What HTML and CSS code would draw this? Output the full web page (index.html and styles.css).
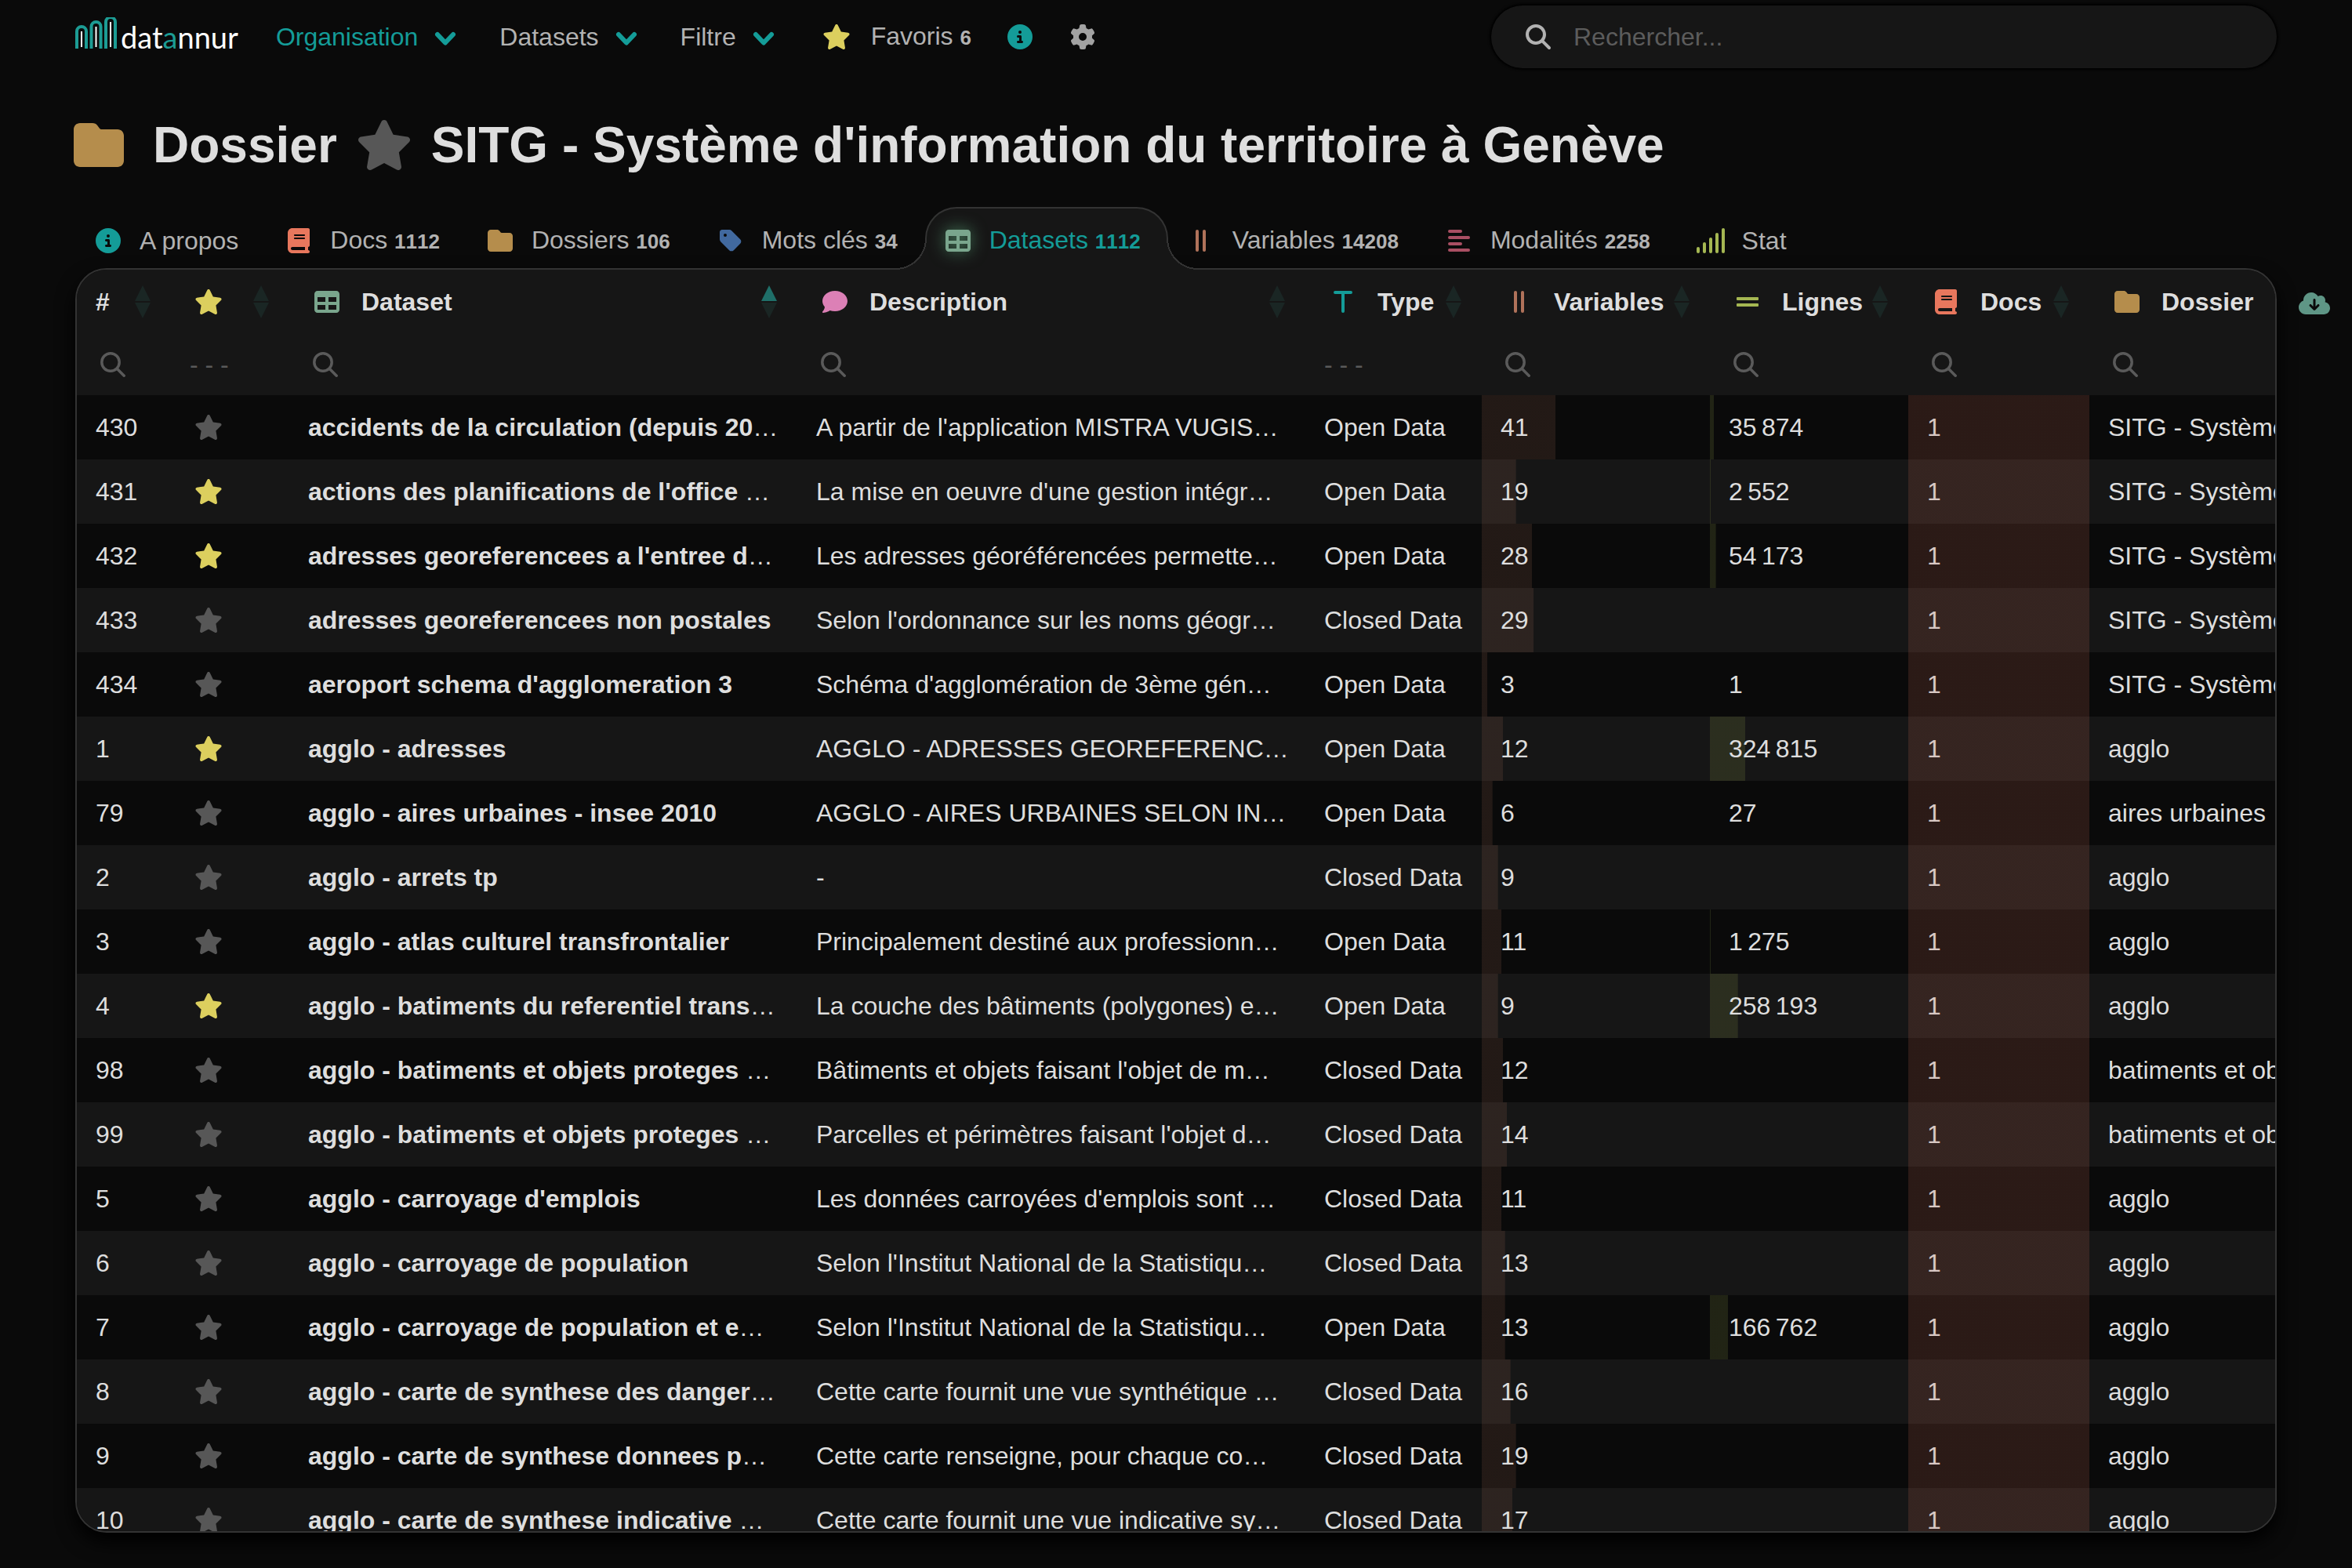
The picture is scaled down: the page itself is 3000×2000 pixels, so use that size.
FILE: index.html
```html
<!DOCTYPE html>
<html lang="fr">
<head>
<meta charset="utf-8">
<meta name="viewport" content="width=device-width, initial-scale=1">
<title>SITG - Système d'information du territoire à Genève | datannur</title>
<link rel="stylesheet" href="styles.css">
</head>
<body>
<svg class="sprite" aria-hidden="true">
  <symbol id="star" viewBox="0 0 576 512"><path d="M316.9 18C311.6 7 300.4 0 288.1 0s-23.4 7-28.8 18L195 150.3 51.4 171.5c-12 1.8-22 10.2-25.7 21.7s-.7 24.2 7.9 32.7L137.8 329 113.2 474.7c-2 12 3 24.2 12.9 31.3s23 8 33.8 2.3l128.3-68.5 128.3 68.5c10.8 5.7 23.9 4.9 33.8-2.3s14.9-19.3 12.9-31.3L438.5 329 542.7 225.9c8.6-8.5 11.7-21.2 7.9-32.7s-13.7-19.9-25.7-21.7L381.2 150.3 316.9 18z"/></symbol>
  <symbol id="info" viewBox="0 0 512 512"><path d="M256 512A256 256 0 1 0 256 0a256 256 0 1 0 0 512zM216 336h24V272H216c-13.3 0-24-10.7-24-24s10.7-24 24-24h48c13.3 0 24 10.7 24 24v88h8c13.3 0 24 10.7 24 24s-10.7 24-24 24H216c-13.3 0-24-10.7-24-24s10.7-24 24-24zm40-208a32 32 0 1 1 0 64 32 32 0 1 1 0-64z"/></symbol>
  <symbol id="gear" viewBox="0 0 512 512"><path d="M495.9 166.6c3.2 8.7 .5 18.4-6.4 24.6l-43.3 39.4c1.1 8.3 1.7 16.8 1.7 25.4s-.6 17.1-1.7 25.4l43.3 39.4c6.9 6.2 9.6 15.9 6.4 24.6c-4.4 11.9-9.7 23.3-15.8 34.3l-4.7 8.1c-6.6 11-14 21.4-22.1 31.2c-5.9 7.2-15.7 9.6-24.5 6.8l-55.7-17.7c-13.4 10.3-28.2 18.9-44 25.4l-12.5 57.1c-2 9.1-9 16.3-18.2 17.8c-13.8 2.3-28 3.5-42.5 3.5s-28.7-1.2-42.5-3.5c-9.2-1.5-16.2-8.7-18.2-17.8l-12.5-57.1c-15.8-6.5-30.6-15.1-44-25.4L83.1 425.9c-8.8 2.8-18.6 .3-24.5-6.8c-8.1-9.8-15.5-20.2-22.1-31.2l-4.7-8.1c-6.1-11-11.4-22.4-15.8-34.3c-3.2-8.7-.5-18.4 6.4-24.6l43.3-39.4C64.6 273.1 64 264.6 64 256s.6-17.1 1.7-25.4L22.4 191.2c-6.9-6.2-9.6-15.9-6.4-24.6c4.4-11.9 9.7-23.3 15.8-34.3l4.7-8.1c6.6-11 14-21.4 22.1-31.2c5.9-7.2 15.7-9.6 24.5-6.8l55.7 17.7c13.4-10.3 28.2-18.9 44-25.4l12.5-57.1c2-9.1 9-16.3 18.2-17.8C227.3 1.2 241.5 0 256 0s28.7 1.2 42.5 3.5c9.2 1.5 16.2 8.7 18.2 17.8l12.5 57.1c15.8 6.5 30.6 15.1 44 25.4l55.7-17.7c8.8-2.8 18.6-.3 24.5 6.8c8.1 9.8 15.5 20.2 22.1 31.2l4.7 8.1c6.1 11 11.4 22.4 15.8 34.3zM256 336a80 80 0 1 0 0-160 80 80 0 1 0 0 160z"/></symbol>
  <symbol id="search" viewBox="0 0 512 512"><path d="M416 208c0 45.9-14.9 88.3-40 122.7L502.6 457.4c12.5 12.5 12.5 32.8 0 45.3s-32.8 12.5-45.3 0L330.7 376c-34.4 25.2-76.8 40-122.7 40C93.1 416 0 322.9 0 208S93.1 0 208 0S416 93.1 416 208zM208 352a144 144 0 1 0 0-288 144 144 0 1 0 0 288z"/></symbol>
  <symbol id="loupe" viewBox="0 0 32 32"><g fill="none" stroke="currentColor" stroke-width="3.500" stroke-linecap="round"><circle cx="13" cy="13" r="11.2"/><path d="M21.5 21.5l8.700 8.700"/></g></symbol>
  <symbol id="chevron" viewBox="0 0 30 30"><path d="M5 12L15 22.500L25 12" fill="none" stroke="currentColor" stroke-width="6" stroke-linecap="round" stroke-linejoin="round"/></symbol>
  <symbol id="book" viewBox="0 0 448 512"><path d="M96 0C43 0 0 43 0 96V416c0 53 43 96 96 96H384h32c17.7 0 32-14.3 32-32s-14.3-32-32-32V384c17.7 0 32-14.3 32-32V32c0-17.7-14.3-32-32-32H384 96zm0 384H352v64H96c-17.7 0-32-14.3-32-32s14.3-32 32-32zm32-240c0-8.8 7.2-16 16-16H336c8.8 0 16 7.2 16 16s-7.2 16-16 16H144c-8.8 0-16-7.2-16-16zm16 48H336c8.8 0 16 7.2 16 16s-7.2 16-16 16H144c-8.8 0-16-7.2-16-16s7.2-16 16-16z"/></symbol>
  <symbol id="folder" viewBox="0 0 512 512"><path d="M64 480H448c35.3 0 64-28.7 64-64V160c0-35.3-28.7-64-64-64H288c-10.1 0-19.6-4.7-25.6-12.8L243.2 57.6C231.1 41.5 212.1 32 192 32H64C28.7 32 0 60.7 0 96V416c0 35.3 28.7 64 64 64z"/></symbol>
  <symbol id="tag" viewBox="0 0 448 512"><path d="M0 80V229.5c0 17 6.7 33.3 18.7 45.3l176 176c25 25 65.5 25 90.5 0L418.7 317.3c25-25 25-65.5 0-90.5l-176-176c-12-12-28.3-18.7-45.3-18.7H48C21.5 32 0 53.5 0 80zm112 32a32 32 0 1 1 0 64 32 32 0 1 1 0-64z"/></symbol>
  <symbol id="grid" viewBox="0 0 512 512"><path d="M64 256V160H224v96H64zm0 64H224v96H64V320zm224 96V320H448v96H288zM448 256H288V160H448v96zM64 32C28.7 32 0 60.7 0 96V416c0 35.3 28.7 64 64 64H448c35.3 0 64-28.7 64-64V96c0-35.3-28.7-64-64-64H64z"/></symbol>
  <symbol id="comment" viewBox="0 0 512 512"><path d="M512 240c0 114.9-114.6 208-256 208c-37.1 0-72.3-6.4-104.1-17.9c-11.9 8.7-31.3 20.6-54.3 30.6C73.6 471.1 44.7 480 16 480c-6.5 0-12.3-3.9-14.8-9.9c-2.5-6-1.1-12.8 3.4-17.4l.3-.3c.3-.3 .7-.7 1.3-1.4c1.1-1.2 2.8-3.1 4.9-5.7c4.1-5 9.6-12.4 15.2-21.6c10-16.6 19.5-38.4 21.4-62.9C17.7 326.8 0 285.1 0 240C0 125.1 114.6 32 256 32s256 93.1 256 208z"/></symbol>
  <symbol id="columns" viewBox="0 0 32 32"><rect x="9" y="2" width="4" height="28" rx="2"/><rect x="18" y="2" width="4" height="28" rx="2"/></symbol>
  <symbol id="lines" viewBox="0 0 32 32"><rect x="2" y="10" width="28" height="4" rx="1"/><rect x="2" y="18" width="28" height="4" rx="1"/></symbol>
  <symbol id="values" viewBox="0 0 32 32"><rect x="2" y="2" width="18" height="4" rx="2"/><rect x="2" y="10" width="28" height="4" rx="2"/><rect x="2" y="18" width="18" height="4" rx="2"/><rect x="2" y="26" width="28" height="4" rx="2"/></symbol>
  <symbol id="type" viewBox="0 0 32 32"><rect x="4" y="2" width="24" height="4" rx="2"/><rect x="14" y="3" width="4" height="27" rx="2"/></symbol>
  <symbol id="signal" viewBox="0 0 40 32"><rect x="2" y="24" width="4" height="8" rx="2"/><rect x="10" y="18" width="4" height="14" rx="2"/><rect x="18" y="12" width="4" height="20" rx="2"/><rect x="26" y="6" width="4" height="26" rx="2"/><rect x="34" y="0" width="4" height="32" rx="2"/></symbol>
  <symbol id="download" viewBox="0 0 640 512"><path d="M144 480C64.5 480 0 415.5 0 336c0-62.8 40.2-116.2 96.2-135.9c-.1-2.7-.2-5.4-.2-8.1c0-88.4 71.6-160 160-160c59.3 0 111 32.2 138.7 80.2C409.9 102 428.3 96 448 96c53 0 96 43 96 96c0 12.2-2.3 23.8-6.4 34.6C596 238.4 640 290.1 640 352c0 70.7-57.3 128-128 128H144zm79-167l80 80c9.4 9.4 24.6 9.4 33.9 0l80-80c9.4-9.4 9.4-24.6 0-33.9s-24.6-9.4-33.9 0l-39 39V184c0-13.3-10.7-24-24-24s-24 10.7-24 24V318.1l-39-39c-9.4-9.4-24.6-9.4-33.9 0s-9.4 24.6 0 33.9z"/></symbol>
  <symbol id="sort" viewBox="0 0 20 42"><path class="sort-up" d="M10 0L20 20H0z"/><path class="sort-down" d="M0 22H20L10 42z"/></symbol>
</svg>

<header class="topbar">
  <a class="logo" href="#" aria-label="datannur">
    <svg class="logo-mark" viewBox="0 0 54 40" aria-hidden="true">
      <g fill="none" stroke="#1c9c94" stroke-width="4"><path d="M2 40V18a6 6 0 0 1 12 0V40"/><path d="M20.500 40V12a6 6 0 0 1 12 0V40"/><path d="M39 40V6a6 6 0 0 1 12 0V40"/></g>
      <g stroke="#fff" stroke-width="2"><path d="M8 18V38"/><path d="M26.500 12V38"/><path d="M45 6V38"/></g>
    </svg>
    <span class="logo-name">dat<span class="logo-accent">a</span>nnur</span>
  </a>
  <nav class="menu">
    <button class="menu-item current" type="button">Organisation <svg class="chevron"><use href="#chevron"/></svg></button>
    <button class="menu-item" type="button">Datasets <svg class="chevron"><use href="#chevron"/></svg></button>
    <button class="menu-item" type="button">Filtre <svg class="chevron"><use href="#chevron"/></svg></button>
    <a class="menu-item" href="#"><svg class="icon gold"><use href="#star"/></svg><span>Favoris <b class="count">6</b></span></a>
  </nav>
  <div class="tools">
    <a href="#" aria-label="A propos"><svg class="icon teal"><use href="#info"/></svg></a>
    <a href="#" aria-label="Options"><svg class="icon silver"><use href="#gear"/></svg></a>
  </div>
  <label class="searchbox"><svg class="searchbox-icon"><use href="#search"/></svg><input type="text" placeholder="Rechercher..." aria-label="Rechercher"></label>
</header>

<h1 class="title">
  <svg class="title-folder brown"><use href="#folder"/></svg>
  <span>Dossier</span>
  <button class="title-star dim" type="button" aria-label="Ajouter aux favoris"><svg><use href="#star"/></svg></button>
  <span>SITG - Système d'information du territoire à Genève</span>
</h1>

<nav class="tabs">
  <a class="tab" href="#"><svg class="icon teal"><use href="#info"/></svg><span>A propos</span></a>
  <a class="tab" href="#"><svg class="icon coral"><use href="#book"/></svg><span>Docs <b class="count">1112</b></span></a>
  <a class="tab" href="#"><svg class="icon brown"><use href="#folder"/></svg><span>Dossiers <b class="count">106</b></span></a>
  <a class="tab" href="#"><svg class="icon blue"><use href="#tag"/></svg><span>Mots clés <b class="count">34</b></span></a>
  <a class="tab active" href="#" aria-current="page"><svg class="icon green"><use href="#grid"/></svg><span>Datasets <b class="count">1112</b></span></a>
  <a class="tab" href="#"><svg class="icon rust"><use href="#columns"/></svg><span>Variables <b class="count">14208</b></span></a>
  <a class="tab" href="#"><svg class="icon rose"><use href="#values"/></svg><span>Modalités <b class="count">2258</b></span></a>
  <a class="tab" href="#"><svg class="icon lime"><use href="#signal"/></svg><span>Stat</span></a>
</nav>

<main class="content">
  <section class="panel">
    <table class="datasets">
      <colgroup><col class="c-num"><col class="c-fav"><col class="c-text"><col class="c-text"><col class="c-type"><col class="c-vars"><col class="c-rows"><col class="c-docs"><col class="c-folder"></colgroup>
      <thead>
        <tr class="heads">
          <th><div class="head"><span>#</span><svg class="sort"><use href="#sort"/></svg></div></th>
          <th><div class="head"><svg class="icon gold"><use href="#star"/></svg><svg class="sort"><use href="#sort"/></svg></div></th>
          <th><div class="head"><svg class="icon green"><use href="#grid"/></svg><span>Dataset</span><svg class="sort ascending"><use href="#sort"/></svg></div></th>
          <th><div class="head"><svg class="icon pink"><use href="#comment"/></svg><span>Description</span><svg class="sort"><use href="#sort"/></svg></div></th>
          <th><div class="head"><svg class="icon teal"><use href="#type"/></svg><span>Type</span><svg class="sort"><use href="#sort"/></svg></div></th>
          <th><div class="head"><svg class="icon rust"><use href="#columns"/></svg><span>Variables</span><svg class="sort"><use href="#sort"/></svg></div></th>
          <th><div class="head"><svg class="icon lime"><use href="#lines"/></svg><span>Lignes</span><svg class="sort"><use href="#sort"/></svg></div></th>
          <th><div class="head"><svg class="icon coral"><use href="#book"/></svg><span>Docs</span><svg class="sort"><use href="#sort"/></svg></div></th>
          <th><div class="head"><svg class="icon brown"><use href="#folder"/></svg><span>Dossier</span><svg class="sort"><use href="#sort"/></svg></div></th>
        </tr>
        <tr class="filters">
          <td><label class="filter"><svg><use href="#loupe"/></svg><input type="text" aria-label="Filtrer #"></label></td>
          <td><select aria-label="Filtrer favoris"><option>- - -</option></select></td>
          <td><label class="filter"><svg><use href="#loupe"/></svg><input type="text" aria-label="Filtrer dataset"></label></td>
          <td><label class="filter"><svg><use href="#loupe"/></svg><input type="text" aria-label="Filtrer description"></label></td>
          <td><select aria-label="Filtrer type"><option>- - -</option></select></td>
          <td><label class="filter"><svg><use href="#loupe"/></svg><input type="text" aria-label="Filtrer variables"></label></td>
          <td><label class="filter"><svg><use href="#loupe"/></svg><input type="text" aria-label="Filtrer lignes"></label></td>
          <td><label class="filter"><svg><use href="#loupe"/></svg><input type="text" aria-label="Filtrer docs"></label></td>
          <td><label class="filter"><svg><use href="#loupe"/></svg><input type="text" aria-label="Filtrer dossier"></label></td>
        </tr>
      </thead>
      <tbody>
        <tr><td>430</td><td><button class="fav" type="button" aria-label="Favori"><svg class="icon"><use href="#star"/></svg></button></td><td><a href="#">accidents de la circulation (depuis 20</a>…</td><td>A partir de l'application MISTRA VUGIS…</td><td>Open Data</td><td class="bar rust" style="--share:32.3%">41</td><td class="bar lime" style="--share:2%">35&thinsp;874</td><td class="bar coral" style="--share:100%">1</td><td>SITG - Système d'information</td></tr>
        <tr><td>431</td><td><button class="fav on" type="button" aria-label="Favori"><svg class="icon"><use href="#star"/></svg></button></td><td><a href="#">actions des planifications de l'office </a>…</td><td>La mise en oeuvre d'une gestion intégr…</td><td>Open Data</td><td class="bar rust" style="--share:15%">19</td><td class="bar lime" style="--share:0.4%">2&thinsp;552</td><td class="bar coral" style="--share:100%">1</td><td>SITG - Système d'information</td></tr>
        <tr><td>432</td><td><button class="fav on" type="button" aria-label="Favori"><svg class="icon"><use href="#star"/></svg></button></td><td><a href="#">adresses georeferencees a l'entree d</a>…</td><td>Les adresses géoréférencées permette…</td><td>Open Data</td><td class="bar rust" style="--share:22%">28</td><td class="bar lime" style="--share:3%">54&thinsp;173</td><td class="bar coral" style="--share:100%">1</td><td>SITG - Système d'information</td></tr>
        <tr><td>433</td><td><button class="fav" type="button" aria-label="Favori"><svg class="icon"><use href="#star"/></svg></button></td><td><a href="#">adresses georeferencees non postales</a></td><td>Selon l'ordonnance sur les noms géogr…</td><td>Closed Data</td><td class="bar rust" style="--share:22.8%">29</td><td></td><td class="bar coral" style="--share:100%">1</td><td>SITG - Système d'information</td></tr>
        <tr><td>434</td><td><button class="fav" type="button" aria-label="Favori"><svg class="icon"><use href="#star"/></svg></button></td><td><a href="#">aeroport schema d'agglomeration 3</a></td><td>Schéma d'agglomération de 3ème gén…</td><td>Open Data</td><td class="bar rust" style="--share:2.4%">3</td><td>1</td><td class="bar coral" style="--share:100%">1</td><td>SITG - Système d'information</td></tr>
        <tr><td>1</td><td><button class="fav on" type="button" aria-label="Favori"><svg class="icon"><use href="#star"/></svg></button></td><td><a href="#">agglo - adresses</a></td><td>AGGLO - ADRESSES GEOREFERENC…</td><td>Open Data</td><td class="bar rust" style="--share:9.4%">12</td><td class="bar lime" style="--share:17.8%">324&thinsp;815</td><td class="bar coral" style="--share:100%">1</td><td>agglo</td></tr>
        <tr><td>79</td><td><button class="fav" type="button" aria-label="Favori"><svg class="icon"><use href="#star"/></svg></button></td><td><a href="#">agglo - aires urbaines - insee 2010</a></td><td>AGGLO - AIRES URBAINES SELON IN…</td><td>Open Data</td><td class="bar rust" style="--share:4.7%">6</td><td>27</td><td class="bar coral" style="--share:100%">1</td><td>aires urbaines</td></tr>
        <tr><td>2</td><td><button class="fav" type="button" aria-label="Favori"><svg class="icon"><use href="#star"/></svg></button></td><td><a href="#">agglo - arrets tp</a></td><td>-</td><td>Closed Data</td><td class="bar rust" style="--share:7.1%">9</td><td></td><td class="bar coral" style="--share:100%">1</td><td>agglo</td></tr>
        <tr><td>3</td><td><button class="fav" type="button" aria-label="Favori"><svg class="icon"><use href="#star"/></svg></button></td><td><a href="#">agglo - atlas culturel transfrontalier</a></td><td>Principalement destiné aux professionn…</td><td>Open Data</td><td class="bar rust" style="--share:8.7%">11</td><td class="bar lime" style="--share:0.4%">1&thinsp;275</td><td class="bar coral" style="--share:100%">1</td><td>agglo</td></tr>
        <tr><td>4</td><td><button class="fav on" type="button" aria-label="Favori"><svg class="icon"><use href="#star"/></svg></button></td><td><a href="#">agglo - batiments du referentiel trans</a>…</td><td>La couche des bâtiments (polygones) e…</td><td>Open Data</td><td class="bar rust" style="--share:7.1%">9</td><td class="bar lime" style="--share:14.1%">258&thinsp;193</td><td class="bar coral" style="--share:100%">1</td><td>agglo</td></tr>
        <tr><td>98</td><td><button class="fav" type="button" aria-label="Favori"><svg class="icon"><use href="#star"/></svg></button></td><td><a href="#">agglo - batiments et objets proteges </a>…</td><td>Bâtiments et objets faisant l'objet de m…</td><td>Closed Data</td><td class="bar rust" style="--share:9.4%">12</td><td></td><td class="bar coral" style="--share:100%">1</td><td>batiments et objets proteges</td></tr>
        <tr><td>99</td><td><button class="fav" type="button" aria-label="Favori"><svg class="icon"><use href="#star"/></svg></button></td><td><a href="#">agglo - batiments et objets proteges </a>…</td><td>Parcelles et périmètres faisant l'objet d…</td><td>Closed Data</td><td class="bar rust" style="--share:11%">14</td><td></td><td class="bar coral" style="--share:100%">1</td><td>batiments et objets proteges</td></tr>
        <tr><td>5</td><td><button class="fav" type="button" aria-label="Favori"><svg class="icon"><use href="#star"/></svg></button></td><td><a href="#">agglo - carroyage d'emplois</a></td><td>Les données carroyées d'emplois sont …</td><td>Closed Data</td><td class="bar rust" style="--share:8.7%">11</td><td></td><td class="bar coral" style="--share:100%">1</td><td>agglo</td></tr>
        <tr><td>6</td><td><button class="fav" type="button" aria-label="Favori"><svg class="icon"><use href="#star"/></svg></button></td><td><a href="#">agglo - carroyage de population</a></td><td>Selon l'Institut National de la Statistiqu…</td><td>Closed Data</td><td class="bar rust" style="--share:10.2%">13</td><td></td><td class="bar coral" style="--share:100%">1</td><td>agglo</td></tr>
        <tr><td>7</td><td><button class="fav" type="button" aria-label="Favori"><svg class="icon"><use href="#star"/></svg></button></td><td><a href="#">agglo - carroyage de population et e</a>…</td><td>Selon l'Institut National de la Statistiqu…</td><td>Open Data</td><td class="bar rust" style="--share:10.2%">13</td><td class="bar lime" style="--share:9.1%">166&thinsp;762</td><td class="bar coral" style="--share:100%">1</td><td>agglo</td></tr>
        <tr><td>8</td><td><button class="fav" type="button" aria-label="Favori"><svg class="icon"><use href="#star"/></svg></button></td><td><a href="#">agglo - carte de synthese des danger</a>…</td><td>Cette carte fournit une vue synthétique …</td><td>Closed Data</td><td class="bar rust" style="--share:12.6%">16</td><td></td><td class="bar coral" style="--share:100%">1</td><td>agglo</td></tr>
        <tr><td>9</td><td><button class="fav" type="button" aria-label="Favori"><svg class="icon"><use href="#star"/></svg></button></td><td><a href="#">agglo - carte de synthese donnees p</a>…</td><td>Cette carte renseigne, pour chaque co…</td><td>Closed Data</td><td class="bar rust" style="--share:15%">19</td><td></td><td class="bar coral" style="--share:100%">1</td><td>agglo</td></tr>
        <tr><td>10</td><td><button class="fav" type="button" aria-label="Favori"><svg class="icon"><use href="#star"/></svg></button></td><td><a href="#">agglo - carte de synthese indicative </a>…</td><td>Cette carte fournit une vue indicative sy…</td><td>Closed Data</td><td class="bar rust" style="--share:13.4%">17</td><td></td><td class="bar coral" style="--share:100%">1</td><td>agglo</td></tr>
      </tbody>
    </table>
  </section>
  <aside class="side"><button class="export" type="button" aria-label="Télécharger"><svg><use href="#download"/></svg></button></aside>
</main>
</body>
</html>
```
FILE: styles.css
```css
:root {
  --page: #0a0a0a;
  --surface: #161616;
  --line: #333;
  --text: #dedede;
  --muted: #b2b2b2;
}

* { box-sizing: border-box; }

body {
  margin: 0;
  height: 100vh;
  display: flex;
  flex-direction: column;
  overflow: hidden;
  background: var(--page);
  color: var(--text);
  font: 32px/40px "Liberation Sans", Arial, sans-serif;
}

a { color: inherit; text-decoration: none; }

button, input, select {
  margin: 0;
  padding: 0;
  border: 0;
  background: none;
  color: inherit;
  font: inherit;
}

svg { display: block; flex: none; fill: currentColor; }
.sprite { position: absolute; width: 0; height: 0; }
.icon { width: 48px; height: 32px; }
.count { font-size: 26px; font-kerning: none; }

.teal { color: #149c98; }
.gold { color: #dccf5e; }
.silver { color: #a2a2a2; }
.coral { color: #e8775d; }
.brown { color: #b58d4c; }
.blue { color: #41699f; }
.green { color: #7aa68d; }
.rust { color: #b0725a; }
.rose { color: #a94f63; }
.lime { color: #a5b752; }
.pink { color: #dc80b6; }
.dim { color: #575757; }

/* Top bar */
.topbar {
  display: flex;
  align-items: center;
  gap: 38px;
  padding: 7px 96px 0;
  color: var(--muted);
}

.logo {
  display: flex;
  align-items: baseline;
  gap: 4px;
  padding-bottom: 8px;
  margin-right: 10px;
  color: #fff;
}
.logo-mark { width: 54px; height: 40px; }
.logo-name { font: 38px/36px Lato, sans-serif; }
.logo-accent { color: #1c9c94; }

.menu { display: flex; gap: 54px; }
.menu-item { display: flex; align-items: center; gap: 20px; white-space: nowrap; }
.menu-item.current { color: #149c98; }
.chevron { width: 30px; height: 30px; color: #149c98; }
.tools { display: flex; gap: 32px; }

.searchbox {
  flex: 0 1 1002px;
  display: flex;
  align-items: center;
  gap: 29px;
  height: 80px;
  margin-left: auto;
  padding: 0 44px;
  border-radius: 40px;
  background: var(--surface);
  box-shadow: 0 0 3px 2px #000;
}
.searchbox-icon { width: 32px; height: 32px; }
.searchbox input { flex: 1; min-width: 0; outline: 0; }
.searchbox input::placeholder { color: #5c5c5c; opacity: 1; }

/* Page title */
.title {
  display: flex;
  align-items: center;
  gap: 24px;
  margin: 62px 96px 43px 94px;
  font-size: 64px;
  line-height: 72px;
  white-space: nowrap;
}
.title-folder { width: 64px; height: 64px; margin-right: 13px; }
.title-star svg { width: 72px; height: 64px; }

/* Tabs */
.tabs {
  display: flex;
  margin: 0 96px -2px;
  color: var(--muted);
}
.tab {
  position: relative;
  display: flex;
  align-items: center;
  gap: 16px;
  height: 80px;
  padding: 4px 33px 0 16px;
  border: 2px solid transparent;
  border-bottom: 0;
  white-space: nowrap;
}
.tab.active {
  z-index: 1;
  border-color: var(--line);
  border-radius: 40px 40px 0 0;
  background: var(--surface);
  color: #149c98;
}
.tab.active .icon { filter: drop-shadow(0 0 10px #4d8a66); }

/* Curved feet that join the active tab to the panel's edge */
.tab.active::before,
.tab.active::after {
  content: "";
  position: absolute;
  bottom: 0;
  width: 40px;
  height: 40px;
}
.tab.active::before {
  right: 100%;
  background: radial-gradient(circle at 0 0, transparent 38px, var(--line) 38px, var(--line) 40px, var(--surface) 40px);
}
.tab.active::after {
  left: 100%;
  background: radial-gradient(circle at 100% 0, transparent 38px, var(--line) 38px, var(--line) 40px, var(--surface) 40px);
}

/* Panel and table */
.content {
  flex: 1;
  min-height: 0;
  display: flex;
  padding: 0 0 45px 96px;
}
.panel {
  flex: 1;
  min-width: 0;
  overflow: auto;
  scrollbar-width: none;
  border: 2px solid var(--line);
  border-radius: 40px;
  box-shadow: 0 12px 24px #000;
}
.side { flex: 0 0 96px; padding-top: 29px; }
.export { display: block; margin: 0 auto; color: #5f9686; }
.export svg { width: 40px; height: 32px; }

.datasets {
  width: 3168px;
  table-layout: fixed;
  border-spacing: 0;
  white-space: nowrap;
}
.c-num { width: 120px; }
.c-fav { width: 151px; }
.c-text { width: 648px; }
.c-type { width: 225px; }
.c-vars { width: 291px; }
.c-rows { width: 253px; }
.c-docs { width: 231px; }

.datasets th, .datasets td { padding: 0 0 0 24px; text-align: left; }
.datasets thead { background: var(--surface); }

.heads { height: 82px; }
.head { display: flex; align-items: center; padding-right: 26px; }
.head .icon { margin-right: 20px; }
.sort { width: 20px; height: 42px; margin-left: auto; color: #1a2624; }
.sort.ascending { --up: #1f6f69; }
.sort-up { fill: var(--up, currentColor); }

.filters { height: 78px; color: #5a5a5a; }
.filter { display: flex; padding-left: 6px; }
.filter svg { width: 32px; height: 32px; }
.filter input { flex: 1; min-width: 0; height: 32px; outline: 0; }
.filters select { display: block; appearance: none; }

.datasets tbody tr { height: 82px; }
.datasets tbody tr:nth-child(even) { background: var(--surface); }
.datasets tbody a { font-weight: bold; white-space: pre; }
.fav { display: block; color: #575757; }
.fav.on { color: #dccf5e; }

/* Cell background proportional to the value */
.bar {
  color: var(--text);
  background: linear-gradient(var(--tint), var(--tint)) 0 0 / var(--share) 100% no-repeat;
}
.bar.rust { --tint: rgb(176 114 90 / 15%); }
.bar.lime { --tint: rgb(165 183 82 / 15%); }
.bar.coral { --tint: rgb(232 119 93 / 15%); color: #d8c8c4; }
```
